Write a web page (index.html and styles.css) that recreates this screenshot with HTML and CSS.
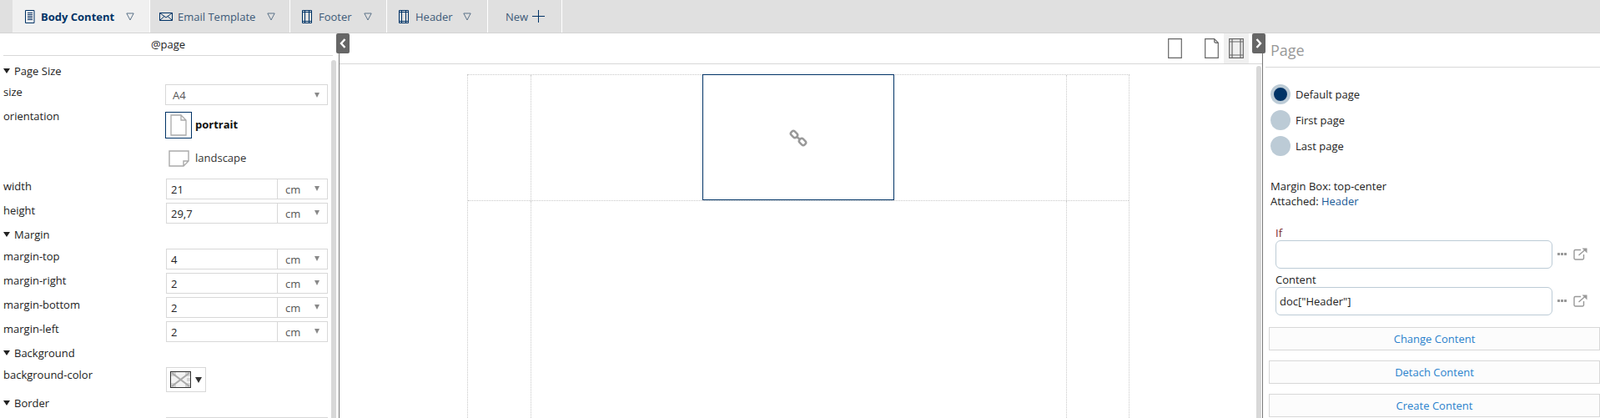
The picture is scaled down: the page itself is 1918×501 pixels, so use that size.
FILE: index.html
```html
<!DOCTYPE html>
<html lang="en">
<head>
  <meta charset="UTF-8" />
  <title>Page Designer</title>
  <link rel="stylesheet" href="styles.css">
</head>
<body>
  <div class="tabs">
    <div class="tab active">
      <svg class="tab-icon" width="12" height="16" viewBox="0 0 12 16"><path d="M.5.5h10.500v15H.5zM3 3.500h6M3 5.500h6M3 7.500h6M3 9.500h6M3 11.500h6" fill="none" stroke="#003366"/></svg>
      <span class="tab-label">Body Content</span>
      <svg class="tab-arrow" width="10" height="10" viewBox="0 0 10 10"><path d="M.8 1h8.400L5 9z" fill="none" stroke="#5b7288"/></svg>
    </div>
    <div class="tab email">
      <svg class="tab-icon" width="16" height="10" viewBox="0 0 16 10"><path d="M.5.500h15v9H.5zM.5.500 8 6l7.500-5.500M.5 9.500 6 4.500M15.500 9.500 10 4.500" fill="none" stroke="#003366"/></svg>
      <span class="tab-label">Email Template</span>
      <svg class="tab-arrow" width="10" height="10" viewBox="0 0 10 10"><path d="M.8 1h8.400L5 9z" fill="none" stroke="#5b7288"/></svg>
    </div>
    <div class="tab footer">
      <svg class="tab-icon" width="12" height="16" viewBox="0 0 12 16"><path d="M.5.500h11v15H.5zM3.500.5v15M8.500.5v15M.5 2.500h11M.5 13.500h11" fill="none" stroke="#003366"/></svg>
      <span class="tab-label">Footer</span>
      <svg class="tab-arrow" width="10" height="10" viewBox="0 0 10 10"><path d="M.8 1h8.400L5 9z" fill="none" stroke="#5b7288"/></svg>
    </div>
    <div class="tab header">
      <svg class="tab-icon" width="12" height="16" viewBox="0 0 12 16"><path d="M.5.500h11v15H.5zM3.500.5v15M8.500.5v15M.5 2.500h11M.5 13.500h11" fill="none" stroke="#003366"/></svg>
      <span class="tab-label">Header</span>
      <svg class="tab-arrow" width="10" height="10" viewBox="0 0 10 10"><path d="M.8 1h8.400L5 9z" fill="none" stroke="#5b7288"/></svg>
    </div>
    <div class="tab new">
      <span class="tab-label">New</span>
      <svg width="15" height="15" viewBox="0 0 15 15"><path d="M7.500 0v15M0 7.500h15" stroke="#003366" fill="none"/></svg>
    </div>
  </div>

  <div class="workspace">
    <aside class="left">
      <div class="left-title">@page</div>
      <div class="props">
        <div class="group first">Page Size</div>
        <div class="row">
          <span class="prop">size</span>
          <div class="select"><span>A4</span><i class="caret"></i></div>
        </div>
        <div class="orient-row">
          <span class="prop">orientation</span>
          <div class="orient-list">
            <div class="orient portrait">
              <span class="orient-btn selected">
                <svg width="20" height="26" viewBox="0 0 20 26"><path d="M1 1h12l6 6v18H1zM13 1v6h6" fill="none" stroke="#aaa" stroke-width="1.300"/></svg>
              </span>
              <b>portrait</b>
            </div>
            <div class="orient landscape">
              <span class="orient-btn">
                <svg width="25" height="20" viewBox="0 0 25 20"><path d="M1 1h23v12l-6 6H1zM24 13h-6v6" fill="none" stroke="#aaa" stroke-width="1.400"/></svg>
              </span>
              <span>landscape</span>
            </div>
          </div>
        </div>
        <div class="row"><span class="prop">width</span><div class="unit-input"><span class="value">21</span><span class="unit">cm<i class="caret"></i></span></div></div>
        <div class="row"><span class="prop">height</span><div class="unit-input"><span class="value">29,7</span><span class="unit">cm<i class="caret"></i></span></div></div>
        <div class="group">Margin</div>
        <div class="row"><span class="prop">margin-top</span><div class="unit-input"><span class="value">4</span><span class="unit">cm<i class="caret"></i></span></div></div>
        <div class="row"><span class="prop">margin-right</span><div class="unit-input"><span class="value">2</span><span class="unit">cm<i class="caret"></i></span></div></div>
        <div class="row"><span class="prop">margin-bottom</span><div class="unit-input"><span class="value">2</span><span class="unit">cm<i class="caret"></i></span></div></div>
        <div class="row"><span class="prop">margin-left</span><div class="unit-input"><span class="value">2</span><span class="unit">cm<i class="caret"></i></span></div></div>
        <div class="group">Background</div>
        <div class="color-row">
          <span class="prop">background-color</span>
          <div class="color-btn">
            <svg width="25" height="20" viewBox="0 0 25 20"><rect width="25" height="20" fill="#f2f2f2"/><path d="M1 1h6v5H1zM18 1h6v5h-6zM1 14h6v5H1zM18 14h6v5h-6zM20 8h4v4h-4z" fill="#d4d4d4"/><path d="M2 2l21 16M23 2 2 18" stroke="#aaa" stroke-width="2.200"/><rect x=".5" y=".5" width="24" height="19" fill="none" stroke="#333"/></svg>
            <i class="color-caret"></i>
          </div>
        </div>
        <div class="group">Border</div>
        <div class="row"><span class="prop"></span><div class="unit-input"></div></div>
      </div>
      <div class="scrollbar"></div>
    </aside>
    <button class="handle handle-left" aria-label="Collapse left panel">
      <svg width="8" height="12" viewBox="0 0 8 12"><path d="M6.500 1 2 6l4.500 5" fill="none" stroke="#fff" stroke-width="2.400"/></svg>
    </button>

    <main class="canvas">
      <div class="toolbar">
        <span class="tool first">
          <svg width="17" height="24" viewBox="0 0 17 24"><path d="M.7.700h15.600v22.600H.7z" fill="none" stroke="#666" stroke-width="1.200"/></svg>
        </span>
        <span class="tool">
          <svg width="17" height="24" viewBox="0 0 17 24"><path d="M.7.700h11l4.600 4.600v18H.7zM11.700.7v2.600c0 1 1 2 2 2h2.600" fill="none" stroke="#666" stroke-width="1.200"/></svg>
        </span>
        <span class="tool on">
          <svg width="18" height="24" viewBox="0 0 18 24"><path d="M.7.700h16.600v22.600H.7zM4 .7v22.600M14 .7v22.600M.7 4h16.600M.7 20h16.600" fill="none" stroke="#666" stroke-width="1.200"/></svg>
        </span>
      </div>
      <div class="sheet">
        <div class="margin-top">
          <div class="corner"></div>
          <div class="box before"></div>
          <div class="box picked">
            <svg width="24" height="24" viewBox="0 0 24 24"><g fill="none" stroke="#999" stroke-width="2.500"><rect x="2.750" y="5" width="8.500" height="6" rx="2.500" transform="rotate(45 7 8)"/><rect x="12.750" y="14" width="8.500" height="6" rx="2.500" transform="rotate(45 17 17)"/><path d="M10 11l4 3"/></g></svg>
          </div>
          <div class="box"></div>
          <div class="corner end"></div>
        </div>
        <div class="margin-body">
          <div class="side"></div>
          <div class="main-box"></div>
          <div class="side end"></div>
        </div>
      </div>
      <div class="scrollbar"></div>
    </main>
    <button class="handle handle-right" aria-label="Collapse right panel">
      <svg width="8" height="12" viewBox="0 0 8 12"><path d="M1.500 1 6 6l-4.500 5" fill="none" stroke="#fff" stroke-width="2.400"/></svg>
    </button>

    <aside class="right">
      <h2 class="right-title">Page</h2>
      <div class="radios">
        <div class="radio-row"><span class="radio checked"></span>Default page</div>
        <div class="radio-row"><span class="radio"></span>First page</div>
        <div class="radio-row"><span class="radio"></span>Last page</div>
      </div>
      <div class="info">
        <div>Margin Box: top-center</div>
        <div>Attached: <span class="link">Header</span></div>
      </div>
      <div class="expr if">
        <label>If</label>
        <div class="expr-line">
          <div class="expr-input"></div>
          <span class="dots"><i></i><i></i><i></i></span>
          <svg width="17" height="15" viewBox="0 0 17 15"><path d="M9 2.500H2.500a1.500 1.500 0 0 0-1.500 1.500v8.500a1.500 1.500 0 0 0 1.500 1.500H11a1.500 1.500 0 0 0 1.500-1.500V8M6.500 9 15 1.500" fill="none" stroke="#999" stroke-width="1.400"/><path d="M10.500 0.500H16.500V6.500z" fill="#999"/></svg>
        </div>
      </div>
      <div class="expr">
        <label>Content</label>
        <div class="expr-line">
          <div class="expr-input">doc["Header"]</div>
          <span class="dots"><i></i><i></i><i></i></span>
          <svg width="17" height="15" viewBox="0 0 17 15"><path d="M9 2.500H2.500a1.500 1.500 0 0 0-1.500 1.500v8.500a1.500 1.500 0 0 0 1.500 1.500H11a1.500 1.500 0 0 0 1.500-1.500V8M6.500 9 15 1.500" fill="none" stroke="#999" stroke-width="1.400"/><path d="M10.500 0.500H16.500V6.500z" fill="#999"/></svg>
        </div>
      </div>
      <div class="actions">
        <button class="action">Change Content</button>
        <button class="action">Detach Content</button>
        <button class="action">Create Content</button>
      </div>
    </aside>
  </div>
</body>
</html>
```

FILE: styles.css
```css
* {
  box-sizing: border-box;
}
html, body {
  margin: 0;
  height: 100%;
  overflow: hidden;
}
body {
  display: flex;
  flex-direction: column;
  background: #fff;
  color: #222;
  font-family: "Open Sans", sans-serif;
  font-size: 13px;
}

/* top tabs */
.tabs {
  display: flex;
  flex: none;
  height: 40px;
  padding-left: 15px;
  background: #e0e0e0;
  border-bottom: 1px solid #d4d4d4;
}
.tab {
  display: flex;
  flex: none;
  align-items: center;
  white-space: nowrap;
  border-right: 1px solid #fff;
  color: #3d5a78;
}
.tab.active {
  width: 165px;
  padding-left: 15px;
  background: #f0f0f0;
  color: #003366;
  font-weight: 700;
}
.tab.email { width: 168px; padding-left: 11px; }
.tab.footer { width: 116px; padding-left: 14px; }
.tab.header { width: 121px; padding-left: 14px; }
.tab.new { width: 89px; padding-left: 21px; }
.tab-icon {
  flex: none;
  margin-right: 8px;
}
.tab.active .tab-icon { margin-right: 7px; }
.tab.email .tab-icon { margin-right: 6px; }
.tab-arrow {
  flex: none;
  margin-left: 14px;
}
.tab.header .tab-arrow { margin-left: 12px; }
.tab.new svg { margin-left: 5px; }

/* panels */
.workspace {
  position: relative;
  display: flex;
  flex: 1;
  min-height: 0;
  overflow: hidden;
}
.left {
  position: relative;
  flex: none;
  width: 407px;
  border-right: 1px solid #777;
  overflow: hidden;
}
.left-title {
  height: 27px;
  margin: 0 7px 0 4px;
  border-bottom: 1px solid #d8d8d8;
  text-align: center;
  line-height: 27px;
}
.props {
  padding: 9px 0 0 4px;
}
.group {
  position: relative;
  height: 26px;
  line-height: 18px;
  padding-left: 13px;
}
.group.first { height: 25px; }
.group::before {
  content: "";
  position: absolute;
  left: 0;
  top: 6px;
  border-style: solid;
  border-width: 6px 4px 0;
  border-color: #222 transparent transparent;
}
.row {
  display: flex;
  height: 25px;
  margin-bottom: 4px;
}
.prop {
  flex: none;
  width: 194px;
  line-height: 18px;
}
.select {
  display: flex;
  align-items: center;
  justify-content: space-between;
  width: 195px;
  padding: 0 9px 0 8px;
  border: 1px solid #d8d8d8;
  color: #555;
}
.caret {
  display: inline-block;
  border-style: solid;
  border-width: 6px 3.500px 0;
  border-color: #888 transparent transparent;
}
.orient-row {
  display: flex;
  height: 84px;
}
.orient-list { padding-top: 4px; }
.orient {
  display: flex;
  align-items: center;
}
.orient > :last-child { margin-top: -2px; }
.orient-btn {
  display: flex;
  flex: none;
  align-items: center;
  justify-content: center;
  width: 32px;
  height: 32px;
  margin-right: 4px;
}
.orient-btn.selected {
  border: 1px solid #003366;
}
.portrait b {
  color: #111;
}
.landscape {
  margin-top: 8px;
  color: #333;
}
.unit-input {
  display: flex;
  width: 194px;
  margin-left: 1px;
  border: 1px solid #d8d8d8;
}
.value {
  flex: 1;
  padding-left: 5px;
  line-height: 24px;
  color: #222;
}
.unit {
  display: flex;
  flex: none;
  align-items: center;
  justify-content: space-between;
  width: 60px;
  padding: 0 9px;
  border-left: 1px solid #d8d8d8;
  color: #555;
}
.unit .caret { margin-top: -2px; }
.color-row {
  display: flex;
  height: 34px;
}
.color-btn {
  display: flex;
  align-items: center;
  gap: 5px;
  width: 48px;
  height: 30px;
  margin-left: 1px;
  padding-left: 4px;
  border: 1px solid #d8d8d8;
}
.color-caret {
  border-style: solid;
  border-width: 7px 4px 0;
  border-color: #333 transparent transparent;
}
.scrollbar {
  position: absolute;
  top: 32px;
  bottom: 0;
  right: 3px;
  width: 6px;
  background: #d8d8d8;
  border-radius: 3px 3px 0 0;
}

/* collapse handles */
.handle {
  position: absolute;
  top: 0;
  z-index: 2;
  display: flex;
  align-items: center;
  justify-content: center;
  width: 16px;
  height: 24px;
  padding: 0;
  border: 0;
  border-radius: 2px;
  background: #666;
}
.handle-left { left: 403px; }
.handle-right { left: 1501px; }

/* canvas */
.canvas {
  position: relative;
  flex: none;
  width: 1107px;
  border-right: 1px solid #777;
  overflow: hidden;
}
.canvas .scrollbar { top: 39px; right: 1px; }
.toolbar {
  display: flex;
  justify-content: flex-end;
  height: 37px;
  padding-right: 16px;
  border-bottom: 1px solid #d8d8d8;
}
.tool {
  display: flex;
  align-items: center;
  justify-content: center;
  width: 29px;
  height: 36px;
}
.tool.first { margin-right: 15px; }
.tool.on { width: 30px; background: #f0f0f0; }
.sheet {
  width: 794px;
  margin: 12px 0 0 153px;
  border: 1px dotted #c8c8c8;
  border-bottom: 0;
}
.margin-top {
  display: flex;
  height: 151px;
  border-bottom: 1px dotted #c8c8c8;
}
.corner {
  flex: none;
  width: 76px;
  border-right: 1px dotted #c8c8c8;
}
.corner.end {
  width: 75px;
  border-right: 0;
  border-left: 1px dotted #c8c8c8;
}
.box { flex: 1; }
.box.before {
  flex: none;
  width: 205px;
}
.box.picked {
  display: flex;
  flex: none;
  align-items: center;
  justify-content: center;
  width: 230px;
  margin-top: -1px;
  border: 1px solid #003366;
}
.margin-body {
  display: flex;
  height: 260px;
}
.side {
  flex: none;
  width: 76px;
  border-right: 1px dotted #c8c8c8;
}
.side.end {
  width: 75px;
  border-right: 0;
  border-left: 1px dotted #c8c8c8;
}
.main-box { flex: 1; }

/* right panel */
.right {
  flex: 1;
  min-width: 0;
}
.right-title {
  height: 41px;
  margin: 0 0 0 3px;
  padding: 7px 0 0 6px;
  border-bottom: 1px solid #d8d8d8;
  color: #999;
  font-size: 18px;
  font-weight: 400;
  line-height: 26px;
}
.radios {
  padding: 20px 0 0 9px;
}
.radio-row {
  display: flex;
  align-items: center;
  gap: 6px;
  height: 24px;
  margin-bottom: 7px;
  color: #222;
}
.radio {
  flex: none;
  width: 24px;
  height: 24px;
  border-radius: 50%;
  background: #bccbd6;
}
.radio.checked {
  border: 4px solid #bccbd6;
  background: #003366;
}
.info {
  margin-top: 27px;
  padding-left: 9px;
  line-height: 18px;
}
.link { color: #1a5a96; }
.expr {
  margin-top: 5px;
  padding-left: 15px;
}
.expr.if { margin-top: 21px; }
.expr label {
  display: block;
  height: 17px;
  line-height: 17px;
}
.expr.if label { color: #7a2a2a; }
.expr-line {
  display: flex;
  align-items: center;
}
.expr-input {
  flex: none;
  width: 332px;
  height: 34px;
  padding-left: 4px;
  border: 1px solid #bccbd6;
  border-radius: 6px;
  line-height: 32px;
}
.expr-line svg {
  margin-left: 8px;
  margin-top: -2px;
}
.dots {
  display: flex;
  gap: 1px;
  margin-left: 6px;
  margin-top: -2px;
}
.dots i {
  width: 3px;
  height: 3px;
  background: #999;
}
.actions {
  display: flex;
  flex-direction: column;
  gap: 12px;
  margin-top: 14px;
  padding-left: 7px;
}
.action {
  width: 397px;
  height: 28px;
  padding: 0;
  border: 1px solid #d8d8d8;
  background: #fcfcfc;
  color: #2a82cc;
  font: inherit;
}
```
